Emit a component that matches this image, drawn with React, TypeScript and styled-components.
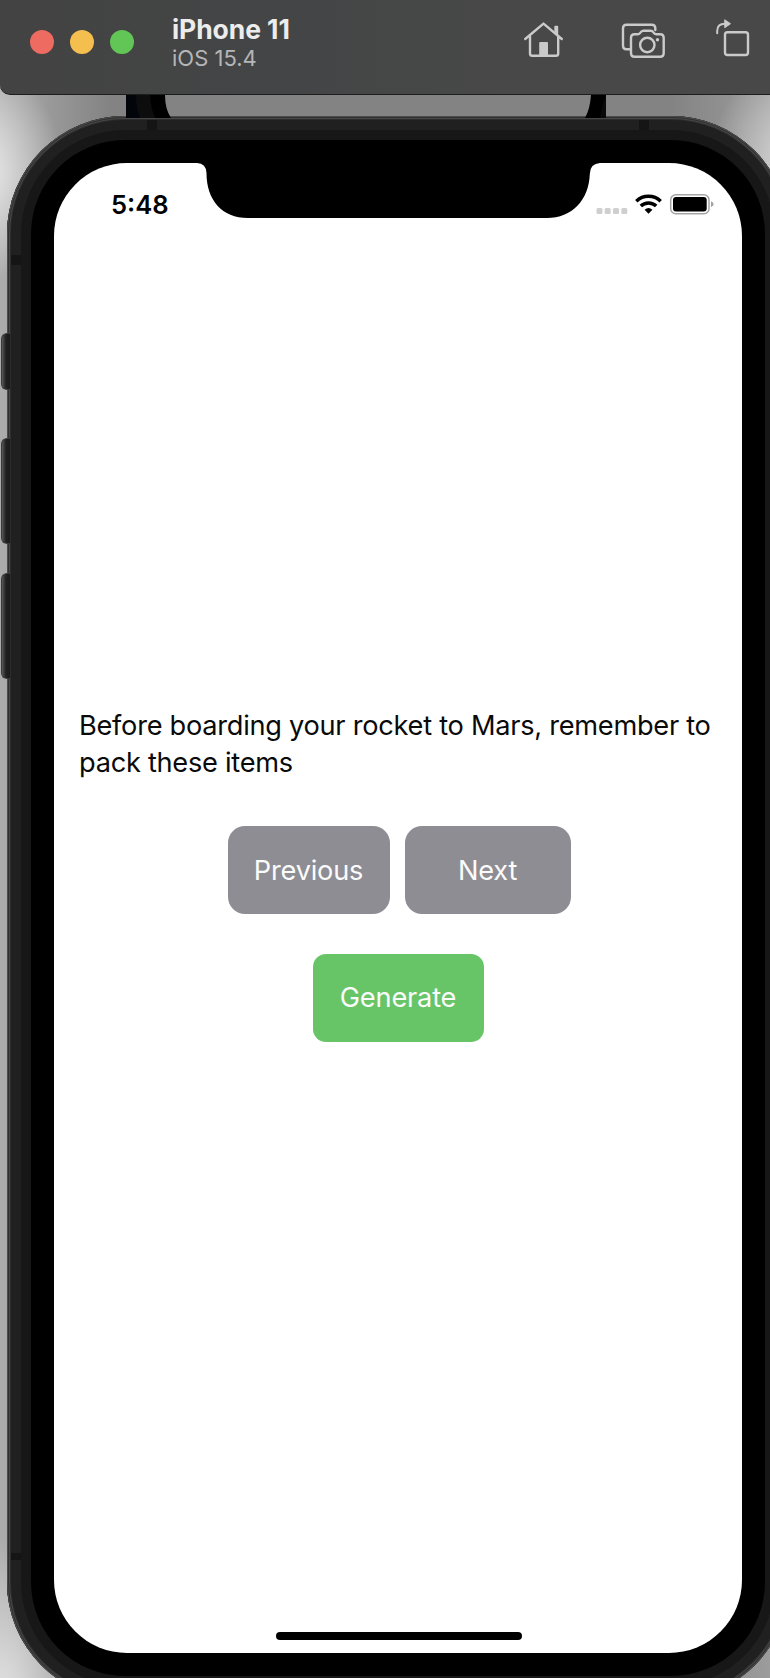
import React from "react";
import styled, { createGlobalStyle } from "styled-components";

const GlobalStyle = createGlobalStyle`
  *, *::before, *::after { box-sizing: border-box; }
  body { margin: 0; background: #b4b4b4; overflow: hidden; }
  button { border: 0; font: inherit; }
`;

const Desktop = styled.main`
  position: relative;
  width: 770px;
  height: 1678px;
  overflow: hidden;
  font-family: Inter, "Liberation Sans", sans-serif;
  background:
    radial-gradient(ellipse 85px 110px at -22px 172px, #eeeeee 0%, rgba(230, 230, 230, 0) 100%),
    radial-gradient(ellipse 90px 110px at 800px 165px, #dedede 0%, rgba(222, 222, 222, 0) 100%),
    radial-gradient(ellipse 90px 160px at 0 1700px, #e4e4e4 0%, rgba(228, 228, 228, 0) 100%),
    linear-gradient(90deg, #acacac 0, #838383 110px, #838383 670px, #9c9c9c 770px);
`;

const TitleBar = styled.header`
  position: relative;
  z-index: 3;
  display: flex;
  align-items: flex-start;
  width: 800px;
  height: 95px;
  padding-left: 30px;
  background: linear-gradient(90deg, #434343 0, #444546 300px, #474847 500px, #484848 770px);
  border-bottom: 1px solid #1d1d1d;
  border-bottom-left-radius: 10px;
`;

const Lights = styled.div`
  display: flex;
  flex: none;
  gap: 16px;
  padding-top: 30px;
`;

const Light = styled.span<{ $color: string }>`
  width: 24px;
  height: 24px;
  border-radius: 50%;
  background: ${(p) => p.$color};
`;

const Titles = styled.div`
  flex: none;
  width: 386px;
  padding: 13px 0 0 38px;
  white-space: nowrap;
`;

const Title = styled.h1`
  margin: 0;
  font-size: 26.5px;
  line-height: 32px;
  font-weight: 700;
  letter-spacing: -0.08px;
  color: #ececec;
`;

const Subtitle = styled.p`
  margin: 0;
  font-size: 22px;
  line-height: 27px;
  color: #b5b6b7;
`;

const Tools = styled.div`
  display: flex;
  flex: none;
  padding-top: 18px;
  svg { display: block; flex: none; }
`;

const HiddenPhone = styled.div`
  position: absolute;
  z-index: 1;
  top: 95px;
  left: 126px;
  width: 480px;
  height: 23px;
  display: flex;
  justify-content: space-between;
`;

const Phone = styled.section`
  position: relative;
  margin: 21px 0 0 7px;
  width: 782px;
  height: 1584px;
  padding: 4px;
  border-radius: 118px;
  background: #202020;
  box-shadow: inset 0 0 0 1px #4c4c4c, inset 0 0 0 2px #303030, inset 0 0 0 3px #464646, inset 0 0 0 4px #2c2c2c;
`;

const Rim = styled.div`
  height: 100%;
  padding: 10px;
  border-radius: 114px;
`;

const InnerRim = styled.div`
  height: 100%;
  padding: 10px;
  border-radius: 104px;
  background: #171717;
`;

const Bezel = styled.div`
  height: 100%;
  padding: 23px;
  border-radius: 94px;
  background: #000;
`;

const Screen = styled.div`
  position: relative;
  display: flex;
  flex-direction: column;
  height: 1490px;
  border-radius: 73px;
  background: #fff;
  overflow: hidden;
`;

const StatusBar = styled.div`
  display: flex;
  justify-content: space-between;
  height: 73px;
  padding: 24px 27px 0 57px;
`;

const Clock = styled.time`
  font-size: 25.6px;
  line-height: 35px;
  font-weight: 600;
  color: #000;
`;

const StatusIcons = styled.svg`
  display: block;
  margin-top: 4px;
`;

const Notch = styled.svg`
  position: absolute;
  top: 0;
  left: 143px;
`;

const Content = styled.div`
  flex: 1;
  display: flex;
  flex-direction: column;
  align-items: center;
  padding-top: 471px;
`;

const Message = styled.p`
  width: 640px;
  margin: 0 0 45px;
  padding-left: 1px;
  font-size: 27.2px;
  line-height: 37px;
  letter-spacing: -0.27px;
  color: #0a0a0a;
  white-space: nowrap;
`;

const ButtonRow = styled.div`
  display: flex;
  gap: 15px;
  margin: 0 0 39.5px 2px;
`;

const ActionButton = styled.button<{ $tone?: "go"; $width: number }>`
  width: ${(p) => p.$width}px;
  height: 88px;
  padding: 0;
  border-radius: ${(p) => (p.$tone ? 13 : 17)}px;
  background: ${(p) => (p.$tone ? "#67c567" : "#8e8d93")};
  color: #fbfbfb;
  font-size: 27.2px;
  line-height: 37px;
  letter-spacing: -0.2px;
`;

const HomeIndicator = styled.div`
  align-self: center;
  width: 246px;
  height: 8px;
  margin: 0 0 13px 1px;
  border-radius: 4px;
  background: #000;
`;

const SideKey = styled.i<{ $top: number; $height: number }>`
  position: absolute;
  left: -6px;
  top: ${(p) => p.$top}px;
  width: 9px;
  height: ${(p) => p.$height}px;
  border: 1px solid #3c3c3c;
  border-right: 0;
  border-radius: 6px 0 0 6px;
  background: linear-gradient(90deg, #5a5a5a 0, #3a3a3a 2px, #202020 4px, #1b1b1b 100%);
`;

const Antenna = styled.i<{ $x: number; $y: number; $w: number; $h: number }>`
  position: absolute;
  left: ${(p) => p.$x}px;
  top: ${(p) => p.$y}px;
  width: ${(p) => p.$w}px;
  height: ${(p) => p.$h}px;
  background: #151515;
`;

const ToolIcons = () => (
  <svg width="240" height="46" viewBox="520 18 240 46" fill="none" stroke="#c9cac9" strokeWidth="2.4" strokeLinecap="round" strokeLinejoin="round">
    <path d="M525.2 39 543.5 23.6 561.8 39M530 36V53.5Q530 55.8 532.3 55.8H556Q558.2 55.8 558.2 53.5V36" />
    <path d="M554.3 33V26.8Q554.3 25.8 555.3 25.8H557.2Q558.2 25.8 558.2 26.8V36Z" fill="#c9cac9" stroke="none" />
    <path d="M539.2 55.5V43Q539.2 42 540.2 42H547Q548 42 548 43V55.5Z" fill="#c9cac9" stroke="none" />
    <path d="M630 49.2H626.5Q623 49.2 623 45.7V28.3Q623 24.8 626.5 24.8H651.8Q655.3 24.8 655.3 28.3V30" />
    <path d="M634.5 34.2H638Q639.5 34.2 640.5 32.5T643.5 30.7H650.5Q652.5 30.7 653.5 32.5T656.5 34.2H660.2Q663.7 34.2 663.7 37.7V53.2Q663.7 56.7 660.2 56.7H634.5Q631 56.7 631 53.2V37.7Q631 34.2 634.5 34.2Z" />
    <circle cx="647.3" cy="45" r="7.2" />
    <circle cx="657.5" cy="39.7" r="1.7" fill="#c9cac9" stroke="none" />
    <rect x="725" y="32.2" width="23" height="22.8" rx="2.5" />
    <path d="M717.2 33.3V31Q717.2 23.7 725 23.7" strokeWidth="2" />
    <path d="M725 20 730.5 23.7 725 27.5Z" fill="#c9cac9" strokeWidth="1" />
  </svg>
);

export default function App() {
  return (
    <>
      <GlobalStyle />
      <Desktop>
        <TitleBar>
          <Lights>
            <Light $color="#ed6b60" />
            <Light $color="#f5bf50" />
            <Light $color="#62c656" />
          </Lights>
          <Titles>
            <Title>iPhone 11</Title>
            <Subtitle>iOS 15.4</Subtitle>
          </Titles>
          <Tools><ToolIcons /></Tools>
        </TitleBar>
        <HiddenPhone>
          <svg width="46" height="23"><path d="M0 0H39Q39 14 45 23H0Z" fill="#000" /><path d="M0 0H10L14 23H0Z" fill="#02060a" /><path d="M10 0H24Q25 14 29 23H14Q10 12 10 0Z" fill="#0d0d0d" /></svg>
          <svg width="21" height="23"><path d="M6 0H21V23H0Q5 14 6 0Z" fill="#000" /><path d="M17 12 21 0V23H15Z" fill="#090909" /></svg>
        </HiddenPhone>
        <Phone>
          <SideKey $top={217} $height={57} />
          <SideKey $top={322} $height={106} />
          <SideKey $top={457} $height={106} />
          <Antenna $x={140} $y={4} $w={10} $h={11} />
          <Antenna $x={632} $y={4} $w={10} $h={11} />
          <Antenna $x={4} $y={139} $w={11} $h={10} />
          <Antenna $x={4} $y={1437} $w={11} $h={7} />
          <Rim>
            <InnerRim>
              <Bezel>
                <Screen>
                  <Notch width="404" height="56" viewBox="0 0 404 56">
                    <path d="M0 0Q9.2 .5 9.5 10C9.5 37 25 55 51 55H350C375 55 392 37 392.8 11Q393 .5 403 0Z" fill="#000" />
                  </Notch>
                  <StatusBar>
                    <Clock>5:48</Clock>
                    <StatusIcons width="120" height="26" viewBox="595 191 120 26">
                      <g fill="#cfcfcf">
                        <rect x="596.5" y="208" width="6" height="6" rx="1.5" />
                        <rect x="604.7" y="208" width="6" height="6" rx="1.5" />
                        <rect x="613" y="208" width="6" height="6" rx="1.5" />
                        <rect x="621.3" y="208" width="6" height="6" rx="1.5" />
                      </g>
                      <g fill="none" stroke="#000" strokeWidth="3.5">
                        <path d="M636.3 201.2A17.5 17.5 0 0 1 660.7 201.2" />
                        <path d="M640.8 206A11.2 11.2 0 0 1 656.2 206" />
                      </g>
                      <path d="M648.5 213.8 644.6 209.8Q648.5 206.4 652.4 209.8Z" fill="#000" />
                      <rect x="670.7" y="194.7" width="38.3" height="19" rx="5" fill="none" stroke="#a5a5a5" strokeWidth="1.5" />
                      <rect x="673" y="197" width="33.7" height="14.5" rx="3" fill="#000" />
                      <path d="M711 201.3Q713.6 202.5 713.6 204.2T711 207.2Z" fill="#a5a5a5" />
                    </StatusIcons>
                  </StatusBar>
                  <Content>
                    <Message>Before boarding your rocket to Mars, remember to<br />pack these items</Message>
                    <ButtonRow>
                      <ActionButton $width={162}>Previous</ActionButton>
                      <ActionButton $width={166}>Next</ActionButton>
                    </ButtonRow>
                    <ActionButton $tone="go" $width={171}>Generate</ActionButton>
                  </Content>
                  <HomeIndicator />
                </Screen>
              </Bezel>
            </InnerRim>
          </Rim>
        </Phone>
      </Desktop>
    </>
  );
}
